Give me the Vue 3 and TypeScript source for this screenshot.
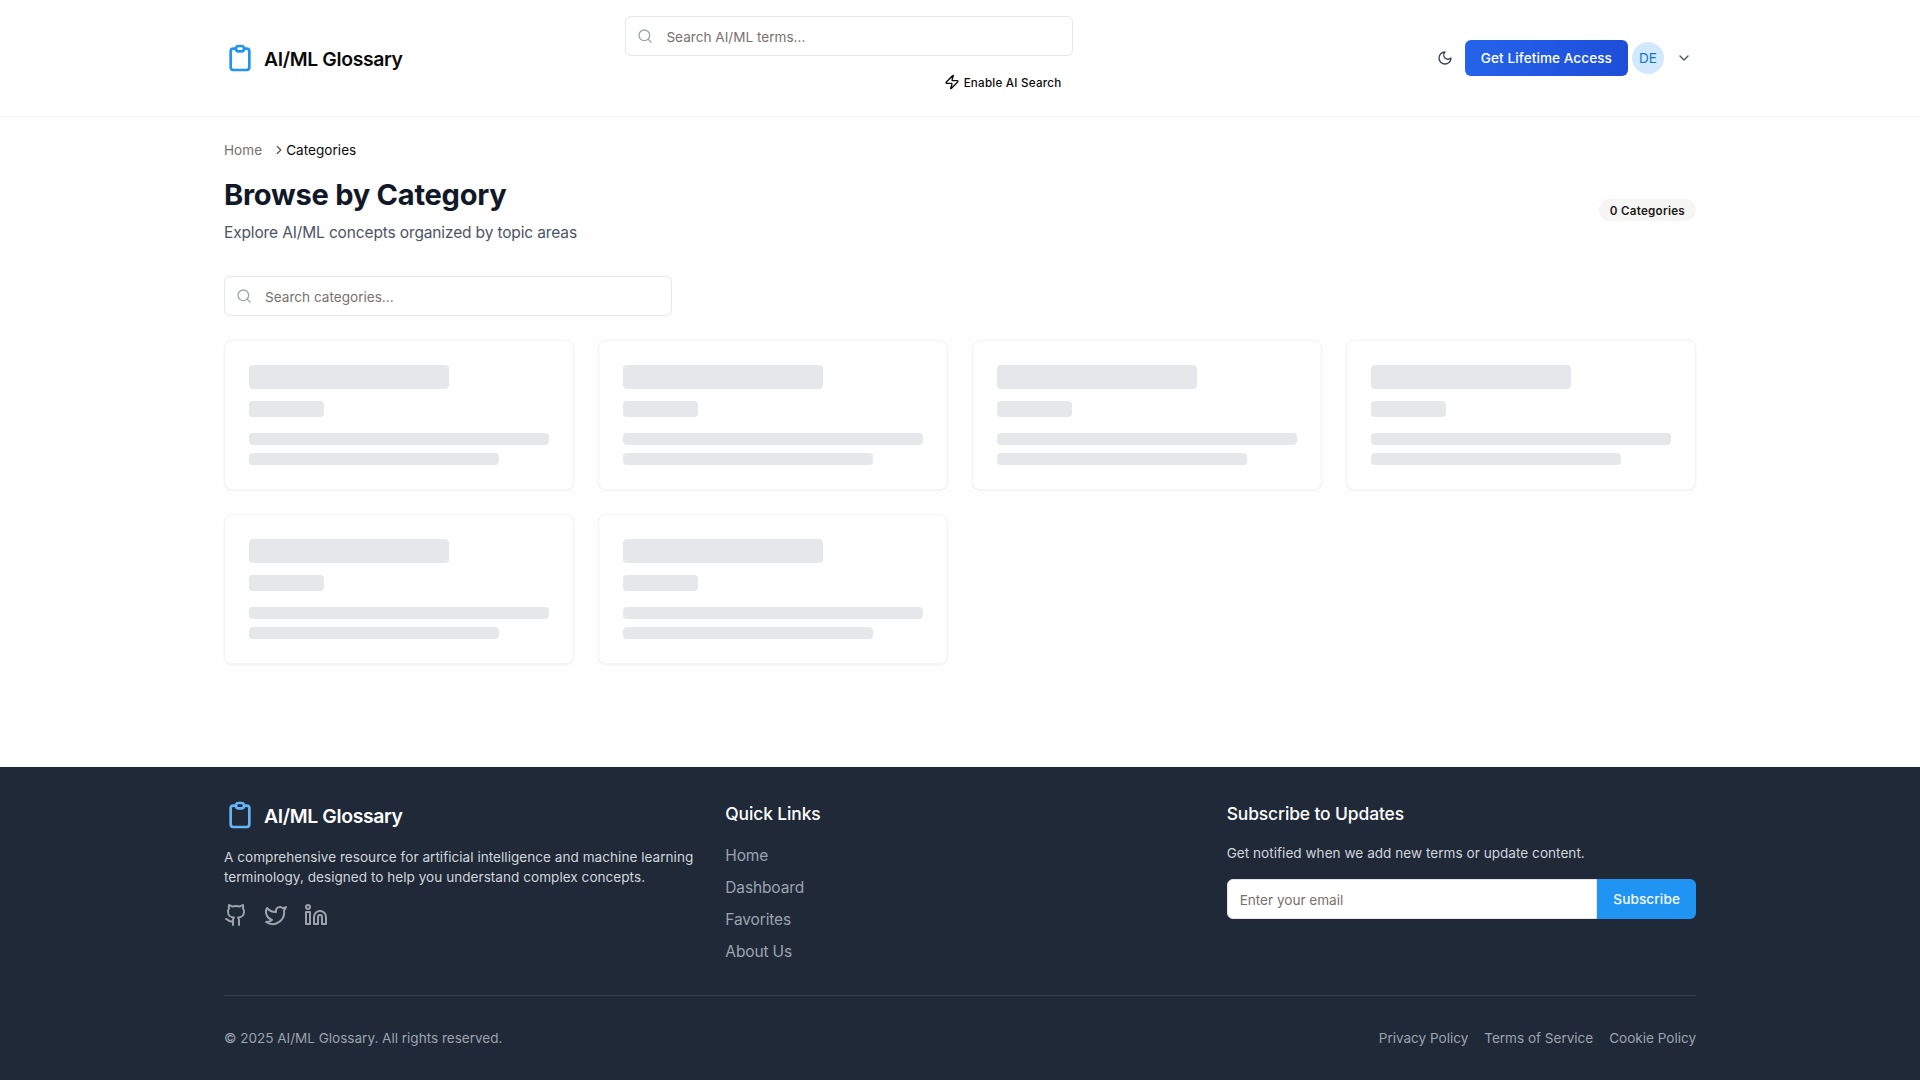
<script setup lang="ts">
const skeletons: number[] = [1, 2, 3, 4, 5, 6]
const quickLinks: string[] = ['Home', 'Dashboard', 'Favorites', 'About Us']
const legalLinks: string[] = ['Privacy Policy', 'Terms of Service', 'Cookie Policy']
const clipboard =
  'M9 5H7a2 2 0 00-2 2v12a2 2 0 002 2h10a2 2 0 002-2V7a2 2 0 00-2-2h-2M9 5a2 2 0 002 2h2a2 2 0 002-2M9 5a2 2 0 012-2h2a2 2 0 012 2'
</script>

<template>
  <div class="page">
    <header class="header">
      <div class="container header-row">
        <a class="brand">
          <svg class="icon brand-icon" viewBox="0 0 24 24"><path :d="clipboard" /></svg>
          <span>AI/ML Glossary</span>
        </a>
        <div class="header-search">
          <label class="search">
            <svg class="icon search-icon" viewBox="0 0 24 24"><circle cx="11" cy="11" r="8" /><path d="m21 21-4.3-4.3" /></svg>
            <input type="text" placeholder="Search AI/ML terms..." />
          </label>
          <button class="ai-button">
            <svg class="icon" viewBox="0 0 24 24"><path d="M4 14a1 1 0 0 1-.78-1.63l9.9-10.2a.5.5 0 0 1 .86.46l-1.92 6.02A1 1 0 0 0 13 10h7a1 1 0 0 1 .78 1.63l-9.9 10.2a.5.5 0 0 1-.86-.46l1.92-6.02A1 1 0 0 0 11 14z" /></svg>
            <span>Enable AI Search</span>
          </button>
        </div>
        <div class="actions">
          <button class="theme-button" aria-label="Toggle theme">
            <svg class="icon" viewBox="0 0 24 24"><path d="M12 3a6 6 0 0 0 9 9 9 9 0 1 1-9-9Z" /></svg>
          </button>
          <button class="cta">Get Lifetime Access</button>
          <button class="user">
            <span class="avatar">DE</span>
            <svg class="icon" viewBox="0 0 24 24"><path d="m6 9 6 6 6-6" /></svg>
          </button>
        </div>
      </div>
    </header>

    <main class="container main">
      <nav class="breadcrumb">
        <a>Home</a>
        <svg class="icon" viewBox="0 0 24 24"><path d="m9 18 6-6-6-6" /></svg>
        <span>Categories</span>
      </nav>
      <div class="heading">
        <div>
          <h1>Browse by Category</h1>
          <p>Explore AI/ML concepts organized by topic areas</p>
        </div>
        <span class="badge">0 Categories</span>
      </div>
      <label class="search category-search">
        <svg class="icon search-icon" viewBox="0 0 24 24"><circle cx="11" cy="11" r="8" /><path d="m21 21-4.3-4.3" /></svg>
        <input type="text" placeholder="Search categories..." />
      </label>
      <div class="grid">
        <div v-for="n in skeletons" :key="n" class="card">
          <div class="bar bar-title"></div>
          <div class="bar bar-count"></div>
          <div class="bar bar-line"></div>
          <div class="bar bar-line bar-short"></div>
        </div>
      </div>
    </main>

    <footer class="footer">
      <div class="container">
        <div class="columns">
          <section>
            <div class="brand footer-brand">
              <svg class="icon brand-icon" viewBox="0 0 24 24"><path :d="clipboard" /></svg>
              <span>AI/ML Glossary</span>
            </div>
            <p class="note about">A comprehensive resource for artificial intelligence and machine learning terminology, designed to help you understand complex concepts.</p>
            <div class="socials">
              <svg class="icon" viewBox="0 0 24 24"><path d="M15 22v-4a4.800 4.800 0 0 0-1-3.500c3 0 6-2 6-5.500.080-1.250-.270-2.480-1-3.500.280-1.150.280-2.350 0-3.500 0 0-1 0-3 1.500-2.640-.500-5.360-.500-8 0C6 2 5 2 5 2c-.300 1.150-.300 2.350 0 3.500A5.403 5.403 0 0 0 4 9c0 3.500 3 5.500 6 5.500-.390.490-.680 1.050-.850 1.650-.170.600-.220 1.230-.150 1.850v4" /><path d="M9 18c-4.510 2-5-2-7-2" /></svg>
              <svg class="icon" viewBox="0 0 24 24"><path d="M22 4s-.7 2.100-2 3.400c1.600 10-9.400 17.300-18 11.600 2.200.1 4.400-.6 6-2C3 15.500.5 9.600 3 5c2.200 2.600 5.600 4.100 9 4-.9-4.200 4-6.600 7-3.800 1.100 0 3-1.200 3-1.200z" /></svg>
              <svg class="icon" viewBox="0 0 24 24"><path d="M16 8a6 6 0 0 1 6 6v7h-4v-7a2 2 0 0 0-2-2 2 2 0 0 0-2 2v7h-4v-7a6 6 0 0 1 6-6z" /><rect width="4" height="12" x="2" y="9" /><circle cx="4" cy="4" r="2" /></svg>
            </div>
          </section>
          <section>
            <h3>Quick Links</h3>
            <ul>
              <li v-for="link in quickLinks" :key="link"><a>{{ link }}</a></li>
            </ul>
          </section>
          <section>
            <h3>Subscribe to Updates</h3>
            <p class="note">Get notified when we add new terms or update content.</p>
            <form class="subscribe" @submit.prevent>
              <input type="email" placeholder="Enter your email" />
              <button type="submit">Subscribe</button>
            </form>
          </section>
        </div>
        <div class="legal">
          <span>© 2025 AI/ML Glossary. All rights reserved.</span>
          <nav><a v-for="link in legalLinks" :key="link">{{ link }}</a></nav>
        </div>
      </div>
    </footer>
  </div>
</template>

<style>
body {
  margin: 0;
  background: #fefefe;
}
</style>

<style scoped>
.page,
.page * {
  box-sizing: border-box;
}
.page {
  min-height: 100vh;
  display: flex;
  flex-direction: column;
  font-family: Inter, 'Liberation Sans', sans-serif;
  font-size: 16px;
  font-size-adjust: 0.529;
  letter-spacing: -0.14px;
  line-height: 24px;
  color: #0c0a09;
  -webkit-font-smoothing: antialiased;
}
h1,
h3,
p,
ul {
  margin: 0;
  padding: 0;
  list-style: none;
}
button,
input {
  font: inherit;
  font-size-adjust: 0.529;
  letter-spacing: inherit;
  color: inherit;
  border: 0;
  margin: 0;
  padding: 0;
  background: none;
}
input {
  outline: none;
}
input::placeholder {
  color: #78716c;
  opacity: 1;
}
.icon {
  width: 16px;
  height: 16px;
  flex: none;
  fill: none;
  stroke: currentColor;
  stroke-width: 2;
  stroke-linecap: round;
  stroke-linejoin: round;
}
.container {
  width: 100%;
  max-width: 1536px;
  margin: 0 auto;
  padding: 0 32px;
}
.header {
  background: #fff;
  border-bottom: 1px solid #f3f4f6;
}
.header-row {
  display: flex;
  align-items: center;
  height: 116px;
}
.brand {
  display: flex;
  align-items: center;
  gap: 8px;
  width: 179px;
  font-size: 20px;
  letter-spacing: -0.36px;
  line-height: 28px;
  font-weight: 600;
  white-space: nowrap;
}
.brand span {
  padding-top: 1px;
}
.brand-icon {
  width: 32px;
  height: 32px;
  color: #2094f3;
}
.header-search {
  width: 448px;
  margin-left: 222.4px;
  display: flex;
  flex-direction: column;
  align-items: flex-end;
  gap: 8px;
}
.search {
  width: 448px;
  height: 40px;
  display: flex;
  align-items: center;
  gap: 13px;
  padding: 0 12px 0 11px;
  border: 1px solid #e5e7eb;
  border-radius: 6px;
  background: #fff;
  font-size: 14px;
  letter-spacing: 0.02px;
  line-height: 20px;
}
.search input {
  flex: 1;
  min-width: 0;
  height: 38px;
  padding-top: 1px;
}
.search-icon {
  color: #9ca3af;
}
.ai-button {
  display: flex;
  align-items: center;
  gap: 4px;
  height: 36px;
  padding: 0 12px;
  font-size: 12px;
  letter-spacing: 0.23px;
  line-height: 16px;
  font-weight: 500;
}
.ai-button span {
  padding-top: 1px;
}
.actions {
  display: flex;
  align-items: center;
  gap: 4px;
  margin-left: auto;
}
.theme-button {
  display: flex;
  padding: 8px;
  color: #374151;
}
.cta {
  height: 36px;
  padding: 0 16px;
  border-radius: 6px;
  background: linear-gradient(to right, #2563eb, #1d4ed8);
  color: #fff;
  font-size: 14px;
  letter-spacing: 0.09px;
  font-weight: 500;
}
.user {
  display: flex;
  align-items: center;
  gap: 12px;
  padding-right: 4px;
  color: #4b5563;
}
.avatar {
  width: 32px;
  height: 32px;
  display: flex;
  align-items: center;
  justify-content: center;
  border-radius: 50%;
  background: #d2e9fd;
  color: #0c77cf;
  font-size: 14px;
  letter-spacing: 0;
  font-weight: 400;
}
.main {
  height: 650px;
  padding-top: 23px;
}
.breadcrumb {
  display: flex;
  align-items: center;
  height: 20px;
  font-size: 14px;
  letter-spacing: 0.04px;
  line-height: 20px;
}
.breadcrumb a {
  color: #78716c;
  margin-right: 10px;
}
.breadcrumb .icon {
  width: 14px;
  height: 14px;
  color: #57534e;
}
.heading {
  display: flex;
  justify-content: space-between;
  align-items: center;
  margin: 16px 0 32px;
}
h1 {
  padding-top: 1px;
  font-size: 30px;
  letter-spacing: -0.26px;
  line-height: 36px;
  font-weight: 700;
  color: #111827;
}
.heading p {
  margin: 8px 0 -1px;
  color: #4b5563;
}
.badge {
  height: 22px;
  padding: 3px 10px 1px;
  border: 1px solid transparent;
  border-radius: 999px;
  background: #f5f5f4;
  color: #1c1917;
  font-size: 12px;
  letter-spacing: 0.27px;
  line-height: 16px;
  font-weight: 600;
}
.grid {
  display: grid;
  grid-template-columns: repeat(4, 1fr);
  gap: 24px;
  margin-top: 24px;
}
.card {
  height: 150px;
  padding: 24px;
  border: 1px solid #f3f4f6;
  border-radius: 8px;
  background: #fff;
  box-shadow: 0 1px 2px rgba(0, 0, 0, 0.05);
}
.bar {
  border-radius: 4px;
  background: #e5e7eb;
}
.bar-title {
  width: 200px;
  height: 24px;
}
.bar-count {
  width: 75px;
  height: 16px;
  margin: 12px 0 16px;
}
.bar-line {
  height: 12px;
}
.bar-short {
  width: 250px;
  margin-top: 8px;
}
.footer {
  background: #1f2937;
  color: #fff;
}
.footer .container {
  padding-top: 32px;
  padding-bottom: 32px;
}
.columns {
  display: grid;
  grid-template-columns: repeat(3, 1fr);
  gap: 32px;
}
.footer-brand .brand-icon {
  color: #64b5f6;
}
.note {
  font-size: 14px;
  letter-spacing: 0.035px;
  line-height: 20px;
  color: #d1d5db;
}
.about {
  margin: 16px 0;
}
.socials {
  display: flex;
  gap: 16px;
  color: #9ca3af;
}
.socials .icon {
  width: 24px;
  height: 24px;
}
h3 {
  padding-top: 1px;
  margin-bottom: 15px;
  font-size: 18px;
  letter-spacing: -0.12px;
  line-height: 28px;
  font-weight: 500;
}
ul {
  display: flex;
  flex-direction: column;
  gap: 8px;
  padding-top: 1px;
  margin-bottom: -1px;
  color: #9ca3af;
}
.subscribe {
  display: flex;
  margin-top: 16px;
  font-size: 14px;
  letter-spacing: 0;
  line-height: 20px;
}
.subscribe input {
  flex: 1;
  min-width: 0;
  height: 40px;
  padding: 2px 12px 0;
  border: 1px solid #e7e5e4;
  border-radius: 6px 0 0 6px;
  background: #fff;
}
.subscribe button {
  height: 40px;
  padding: 0 16px;
  border-radius: 0 6px 6px 0;
  background: #2094f3;
  color: #f8fafc;
  letter-spacing: 0.13px;
  font-weight: 500;
}
.legal {
  display: flex;
  justify-content: space-between;
  margin-top: 32px;
  padding-top: 32px;
  border-top: 1px solid #374151;
  font-size: 14px;
  letter-spacing: -0.01px;
  line-height: 20px;
  color: #9ca3af;
}
.legal nav {
  display: flex;
  gap: 16px;
}
</style>
